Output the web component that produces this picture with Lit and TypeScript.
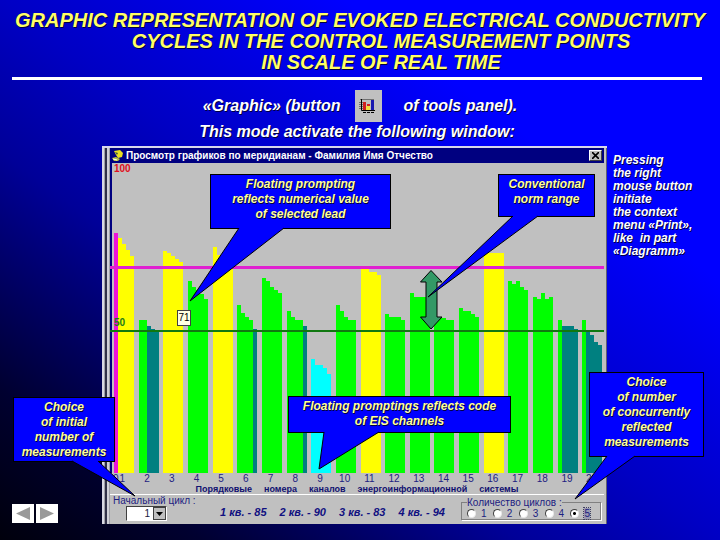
import { LitElement, html, svg, css } from "lit";
import { customElement, property, state } from "lit/decorators.js";

const YELLOW = "#ffff00";
const GREEN = "#00ff00";
const TEAL = "#008080";
const CYAN = "#00ffff";
const PINK = "#ec14d8";

interface Channel {
  tops: number[];
  colors: string[];
}

const five = (c: string) => [c, c, c, c, c];

const CHANNELS: Channel[] = [
  { tops: [70, 75, 81, 87, 93], colors: [PINK, YELLOW, YELLOW, YELLOW, YELLOW] },
  { tops: [157, 157, 163, 166, 168], colors: [GREEN, GREEN, TEAL, TEAL, TEAL] },
  { tops: [88, 90, 93, 96, 99], colors: five(YELLOW) },
  { tops: [118, 124, 127, 131, 136], colors: five(GREEN) },
  { tops: [84, 92, 96, 100, 105], colors: five(YELLOW) },
  { tops: [142, 150, 154, 157, 166], colors: [GREEN, GREEN, GREEN, GREEN, TEAL] },
  { tops: [115, 118, 124, 127, 130], colors: five(GREEN) },
  { tops: [148, 154, 157, 157, 163], colors: [GREEN, GREEN, GREEN, GREEN, TEAL] },
  { tops: [196, 202, 202, 205, 211], colors: five(CYAN) },
  { tops: [142, 148, 154, 157, 157], colors: five(GREEN) },
  { tops: [104, 106, 109, 109, 112], colors: five(YELLOW) },
  { tops: [151, 154, 154, 154, 157], colors: five(GREEN) },
  { tops: [130, 134, 134, 134, 134], colors: five(GREEN) },
  { tops: [154, 154, 155, 157, 157], colors: five(GREEN) },
  { tops: [145, 148, 148, 151, 154], colors: five(GREEN) },
  { tops: [90, 90, 90, 90, 90], colors: five(YELLOW) },
  { tops: [118, 121, 118, 124, 127], colors: five(GREEN) },
  { tops: [134, 136, 130, 136, 134], colors: five(GREEN) },
  { tops: [157, 163, 163, 163, 166], colors: [GREEN, TEAL, TEAL, TEAL, TEAL] },
  { tops: [157, 168, 172, 179, 182], colors: [GREEN, TEAL, TEAL, TEAL, TEAL] },
];

@customElement("callout-note")
export class CalloutNote extends LitElement {
  /** Tail corners as x,y pairs, measured from the lower left corner of the box. */
  @property() tail = "";

  static styles = css`
    :host {
      display: block;
      box-sizing: border-box;
      background: #0000ff;
      border: 1px solid #000;
      padding-top: 2px;
      color: #ffff99;
      font: italic bold 12px/15px "Liberation Sans", Arial, sans-serif;
      text-align: center;
      text-shadow: 1px 1px 0 #000040;
      white-space: nowrap;
    }
    .tail {
      position: absolute;
      left: -1px;
      top: 100%;
      width: 1px;
      height: 1px;
      overflow: visible;
      pointer-events: none;
    }
    .tail polyline {
      fill: #0000ff;
      stroke: #000;
      stroke-width: 1;
    }
  `;

  render() {
    return html`<slot></slot>
      <svg class="tail" aria-hidden="true"><polyline points=${this.tail}></polyline></svg>`;
  }
}

@customElement("meridian-chart")
export class MeridianChart extends LitElement {
  static styles = css`
    :host {
      display: block;
      position: relative;
    }
    .plot {
      display: block;
      width: 100%;
      height: 310px;
    }
    .mark {
      position: absolute;
      left: 4px;
      font: bold 10px/12px "Liberation Sans", Arial, sans-serif;
    }
    .top {
      top: 0;
      color: #e01020;
    }
    .mid {
      top: 154px;
      color: #1c7a1c;
    }
    .tip {
      position: absolute;
      left: 67px;
      top: 147px;
      box-sizing: border-box;
      width: 14px;
      height: 16px;
      background: #ffffe1;
      border: 1px solid #404040;
      color: #000;
      font: 10px/14px "Liberation Sans", Arial, sans-serif;
      display: flex;
      justify-content: center;
    }
  `;

  render() {
    return html`
      <svg class="plot" viewBox="0 0 493 310" preserveAspectRatio="none" shape-rendering="crispEdges">
        <rect width="493" height="310" fill="#c0c0c0"></rect>
        <rect width="2" height="310" fill="#000080"></rect>
        ${CHANNELS.map((c, i) =>
          c.tops.map(
            (top, j) => svg`<rect x=${4 + i * 24.6 + j * 4} y=${top} width="4" height=${310 - top} fill=${c.colors[j]}></rect>`
          )
        )}
        <rect y="103" width="493" height="3" fill="#e020d0"></rect>
        <rect y="167" width="493" height="2" fill="#107810"></rect>
      </svg>
      <span class="mark top">100</span>
      <span class="mark mid">50</span>
      <span class="tip">71</span>
    `;
  }
}

@customElement("app-root")
export class AppRoot extends LitElement {
  @state() private cycles = 5;

  static styles = css`
    :host {
      display: block;
      font-family: "Liberation Sans", Arial, sans-serif;
    }
    .slide {
      box-sizing: border-box;
      min-height: 100vh;
      padding: 10px 0 15px;
      overflow: hidden;
      background: linear-gradient(to top right, #00000c 0%, #000030 14%, #000098 36%, #0000c4 50%, #0000ff 74%);
    }
    .title {
      margin: 0;
      color: #ffff66;
      font: italic bold 20px/21px "Liberation Sans", Arial, sans-serif;
      text-align: center;
      text-shadow: 1px 1px 0 #000040;
      white-space: nowrap;
    }
    .title span {
      display: block;
    }
    .title .shifted {
      padding-left: 42px;
    }
    .rule {
      height: 3px;
      margin: 4px 18px 10px 12px;
      border: 0;
      background: #fff;
    }
    .intro {
      color: #fff;
      font: italic bold 16px/20px "Liberation Sans", Arial, sans-serif;
      font-size: 16px;
      text-shadow: 1px 1px 0 #000040;
      text-align: center;
    }
    .line {
      display: flex;
      align-items: center;
      justify-content: center;
    }
    .tool {
      width: 27px;
      height: 32px;
      margin: 0 22px 0 14px;
      padding: 0;
      border: 0;
      background: #c0c0c0;
    }
    .tool svg {
      display: block;
    }
    .second {
      margin: 0 0 4px;
      padding-right: 6px;
    }
    .stage {
      display: grid;
      grid-template-columns: 102px minmax(0, 1fr) 106px;
      padding-right: 7px;
    }
    .nav {
      display: flex;
      gap: 2px;
      align-self: end;
      padding-left: 12px;
      margin-bottom: 1px;
    }
    .nav button {
      width: 22px;
      height: 19px;
      padding: 0;
      border: 0;
      background: #fff;
    }
    .nav svg {
      display: block;
      margin: auto;
    }
    .window {
      position: relative;
      display: grid;
      grid-template-columns: 8px minmax(0, 1fr);
      background: #c0c0c0;
      border-top: 2px solid #d8d8ec;
    }
    .edge {
      background: linear-gradient(90deg, #d8d8e4 0 2px, #a0a0a8 2px 3px, #303048 3px 5px, #d0d0d8 5px 7px, #a0a0a8 7px);
    }
    .frame {
      border-right: 1px solid #606070;
      padding-right: 2px;
    }
    .bar {
      display: flex;
      align-items: center;
      justify-content: space-between;
      height: 15px;
      padding: 0 2px 0 1px;
      background: #000080;
      color: #fff;
      font-size: 10px;
      font-weight: bold;
      white-space: nowrap;
    }
    .name {
      display: flex;
      align-items: center;
      gap: 2px;
    }
    .close {
      width: 13px;
      height: 11px;
      padding: 0;
      border: 1px solid;
      border-color: #fff #404040 #404040 #fff;
      background: #c0c0c0;
    }
    .close svg {
      display: block;
      margin: auto;
    }
    .ticks {
      display: grid;
      grid-template-columns: repeat(20, minmax(0, 1fr));
      color: #202080;
      font-size: 10px;
      line-height: 11px;
      text-align: center;
    }
    .zero {
      position: absolute;
      left: 11px;
    }
    .axis {
      display: flex;
      justify-content: center;
      gap: 12px;
      color: #101070;
      font-size: 9px;
      font-weight: bold;
      line-height: 10px;
      white-space: nowrap;
    }
    .panel {
      display: grid;
      grid-template-columns: 84px minmax(0, 1fr) 143px;
      height: 29px;
      border-top: 1px solid #fff;
      color: #202080;
      font-size: 10px;
      line-height: 11px;
      white-space: nowrap;
    }
    .start {
      padding-left: 3px;
    }
    .start label {
      display: block;
    }
    .start select {
      appearance: none;
      display: block;
      box-sizing: border-box;
      width: 41px;
      height: 15px;
      margin-left: 13px;
      padding: 0 16px 0 0;
      border: 1px solid;
      border-color: #404040 #fff #fff #404040;
      border-radius: 0;
      background: #fff;
      color: #202040;
      font: 10px/12px "Liberation Sans", Arial, sans-serif;
      text-align: right;
      text-align-last: right;
    }
    .picker {
      position: relative;
      width: 54px;
    }
    .arrow {
      position: absolute;
      right: 1px;
      top: 1px;
      pointer-events: none;
    }
    .values {
      display: flex;
      align-items: center;
      justify-content: center;
      gap: 13px;
      padding: 6px 0 0 10px;
      color: #101080;
      font-size: 11px;
      font-style: italic;
      font-weight: bold;
    }
    .cycles {
      display: flex;
      justify-content: space-between;
      min-width: 0;
      height: 23px;
      box-sizing: border-box;
      margin: 2px 3px 0 0;
      padding: 0 10px 0 5px;
      border: 1px solid #808080;
      box-shadow: 1px 1px 0 #fff;
    }
    .cycles legend {
      padding: 0;
      height: 11px;
    }
    .cycles label {
      display: flex;
      align-items: center;
      gap: 5px;
      height: 11px;
    }
    .cycles input {
      appearance: none;
      box-sizing: border-box;
      width: 9px;
      height: 9px;
      margin: 0;
      border: 1px solid;
      border-color: #404040 #e8e8e8 #e8e8e8 #404040;
      border-radius: 50%;
      background: #fff;
    }
    .cycles input:checked {
      background: radial-gradient(circle, #000 0 1px, #fff 2px);
    }
    .picked {
      background: #9898b0;
      outline: 1px dotted #404060;
    }
    .aside {
      margin: 8px 0 0;
      padding-left: 6px;
      color: #fff;
      font: italic bold 12px/13px "Liberation Sans", Arial, sans-serif;
      text-shadow: 1px 1px 0 #000040;
      white-space: pre;
    }
    .range {
      position: absolute;
      left: 318px;
      top: 122px;
    }
    callout-note {
      position: absolute;
    }
    .lead {
      left: 108px;
      top: 26px;
      width: 181px;
      height: 55px;
    }
    .norm {
      right: 12px;
      top: 26px;
      width: 97px;
      height: 43px;
    }
    .codes {
      left: 186px;
      top: 248px;
      width: 223px;
      height: 37px;
    }
    .initial {
      left: -89px;
      top: 249px;
      width: 102px;
      height: 65px;
    }
    .count {
      right: -97px;
      top: 224px;
      width: 115px;
      height: 85px;
    }
  `;

  private renderWindow() {
    return html`
      <section class="window">
        <div class="edge"></div>
        <div class="frame">
          <div class="bar">
            <span class="name">
              <svg width="13" height="13" viewBox="0 0 13 13" aria-hidden="true">
                <path d="M3 2 L9 1 L12 4 L11 8 L7 9 L5 6 Z" fill="#e8e020"></path>
                <path d="M4 3 L7 4 L6 6 Z" fill="#405040"></path>
                <path d="M1 9 L5 8 L9 10 L7 12 L3 12 Z" fill="#b8c040"></path>
                <path d="M2 10 L6 11" stroke="#fff"></path>
              </svg>
              <span>Просмотр графиков по меридианам - Фамилия Имя Отчество</span>
            </span>
            <button class="close" aria-label="Close">
              <svg width="7" height="7" viewBox="0 0 7 7"><path d="M0 0 L7 7 M7 0 L0 7" stroke="#000" stroke-width="1.6"></path></svg>
            </button>
          </div>
          <meridian-chart></meridian-chart>
          <div class="ticks">
            <span class="zero">0</span>
            ${CHANNELS.map((_, i) => html`<span>${i + 1}</span>`)}
          </div>
          <div class="axis">
            <span>Порядковые</span><span>номера</span><span>каналов</span><span>энергоинформационной</span><span>системы</span>
          </div>
          <div class="panel">
            <div class="start">
              <label for="first">Начальный цикл :</label>
              <div class="picker">
                <select id="first"><option>1</option><option>2</option></select>
                <svg class="arrow" width="13" height="13" viewBox="0 0 13 13" aria-hidden="true">
                  <rect x=".5" y=".5" width="12" height="12" fill="#c0c0c0" stroke="#404040"></rect>
                  <path d="M3 5 H10 L6.500 9 Z" fill="#000"></path>
                </svg>
              </div>
            </div>
            <div class="values">
              <span>1 кв. - 85</span><span>2 кв. - 90</span><span>3 кв. - 83</span><span>4 кв. - 94</span>
            </div>
            <fieldset class="cycles">
              <legend>Количество циклов :</legend>
              ${[1, 2, 3, 4, 5].map(
                (n) => html`<label
                  ><input type="radio" name="cycles" .checked=${this.cycles === n} @change=${() => (this.cycles = n)} /><span
                    class=${this.cycles === n ? "picked" : ""}
                    >${n}</span
                  ></label
                >`
              )}
            </fieldset>
          </div>
        </div>
        <svg class="range" width="23" height="60" viewBox="0 0 23 60" aria-hidden="true">
          <path d="M11 .5 L22 12 H17 V47 H22 L11 59 L.5 47 H6 V12 H.5 Z" fill="#339966" stroke="#000"></path>
        </svg>
        <callout-note class="lead" tail="29,0 -20,73 74,0">Floating prompting<br />reflects numerical value<br />of selected lead</callout-note>
        <callout-note class="norm" tail="15,0 -70,81 40,0">Conventional<br />norm range</callout-note>
        <callout-note class="codes" tail="36,0 31,37 91,0">Floating promptings reflects code<br />of EIS channels</callout-note>
        <callout-note class="initial" tail="59,0 122,35 85,0">Choice<br />of initial<br />number of<br />measurements</callout-note>
        <callout-note class="count" tail="18,0 -14,43 46,0">Choice<br />of number<br />of concurrently<br />reflected<br />measurements</callout-note>
      </section>
    `;
  }

  render() {
    return html`
      <main class="slide">
        <h1 class="title">
          <span>GRAPHIC REPRESENTATION OF EVOKED ELECTRICAL CONDUCTIVITY</span>
          <span class="shifted">CYCLES IN THE CONTROL MEASUREMENT POINTS</span>
          <span class="shifted">IN SCALE OF REAL TIME</span>
        </h1>
        <hr class="rule" />
        <div class="intro">
          <div class="line">
            <span>«Graphic» (button</span>
            <button class="tool" aria-label="Graphic">
              <svg width="27" height="32" viewBox="0 0 27 32">
                <path d="M5 9.500 H19 M4 12.500 H8 M4 14.500 H8 M4 16.500 H8 M4 18.500 H8" stroke="#707070"></path>
                <rect x="8" y="12" width="3" height="8" fill="#d02020"></rect>
                <rect x="11" y="16" width="4" height="4" fill="#f0e040"></rect>
                <rect x="12" y="14" width="3" height="2" fill="#d02020"></rect>
                <rect x="16" y="10" width="3" height="10" fill="#1818b0"></rect>
                <path d="M6.500 9 V20.500 H20" stroke="#000" fill="none"></path>
                <path d="M8 22.500 H19" stroke="#000" stroke-dasharray="3 1"></path>
              </svg>
            </button>
            <span>of tools panel).</span>
          </div>
          <p class="second">This mode activate the following window:</p>
        </div>
        <div class="stage">
          <nav class="nav">
            <button aria-label="Previous">
              <svg width="16" height="15" viewBox="0 0 16 15"><path d="M1 7.500 L15 1 V14 Z" fill="#999"></path></svg>
            </button>
            <button aria-label="Next">
              <svg width="16" height="15" viewBox="0 0 16 15"><path d="M15 7.500 L1 1 V14 Z" fill="#999"></path></svg>
            </button>
          </nav>
          ${this.renderWindow()}
          <p class="aside">Pressing
the right
mouse button
initiate
the context
menu «Print»,
like  in part
«Diagramm»</p>
        </div>
      </main>
    `;
  }
}
